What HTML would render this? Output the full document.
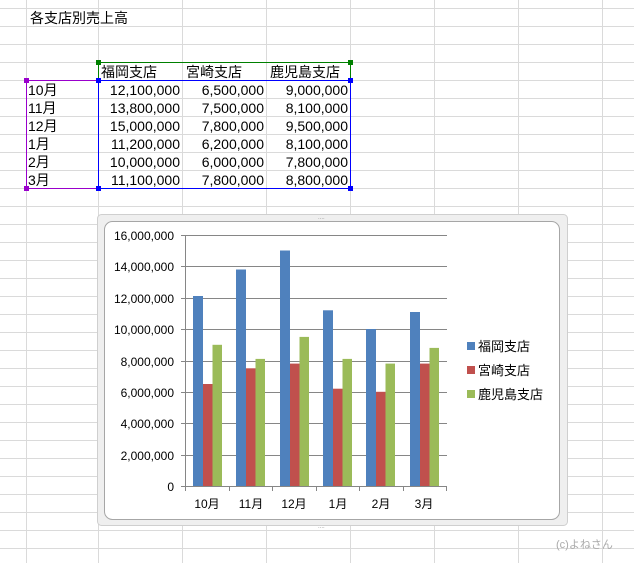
<!DOCTYPE html>
<html><head><meta charset="utf-8"><style>
body{margin:0;width:634px;height:563px;background:#fff;position:relative;overflow:hidden;font-family:"Liberation Sans","Noto Sans CJK JP",sans-serif;}
.t{position:absolute;font-size:14px;line-height:19px;white-space:nowrap;color:#000;}
.r{text-align:right;}
</style></head><body>
<svg width="634" height="563" style="position:absolute;left:0;top:0">
<g stroke="#dadada" stroke-width="1">
<line x1="26.5" y1="0" x2="26.5" y2="563"/><line x1="98.5" y1="0" x2="98.5" y2="563"/>
<line x1="182.5" y1="0" x2="182.5" y2="563"/><line x1="266.5" y1="0" x2="266.5" y2="563"/>
<line x1="350.5" y1="0" x2="350.5" y2="563"/><line x1="434.5" y1="0" x2="434.5" y2="563"/>
<line x1="518.5" y1="0" x2="518.5" y2="563"/><line x1="602.5" y1="0" x2="602.5" y2="563"/>
<line x1="0" y1="8.5" x2="634" y2="8.5"/><line x1="0" y1="26.5" x2="634" y2="26.5"/>
<line x1="0" y1="44.5" x2="634" y2="44.5"/><line x1="0" y1="62.5" x2="634" y2="62.5"/>
<line x1="0" y1="80.5" x2="634" y2="80.5"/><line x1="0" y1="98.5" x2="634" y2="98.5"/>
<line x1="0" y1="116.5" x2="634" y2="116.5"/><line x1="0" y1="134.5" x2="634" y2="134.5"/>
<line x1="0" y1="152.5" x2="634" y2="152.5"/><line x1="0" y1="170.5" x2="634" y2="170.5"/>
<line x1="0" y1="188.5" x2="634" y2="188.5"/><line x1="0" y1="206.5" x2="634" y2="206.5"/>
<line x1="0" y1="224.5" x2="634" y2="224.5"/><line x1="0" y1="242.5" x2="634" y2="242.5"/>
<line x1="0" y1="260.5" x2="634" y2="260.5"/><line x1="0" y1="278.5" x2="634" y2="278.5"/>
<line x1="0" y1="296.5" x2="634" y2="296.5"/><line x1="0" y1="314.5" x2="634" y2="314.5"/>
<line x1="0" y1="332.5" x2="634" y2="332.5"/><line x1="0" y1="350.5" x2="634" y2="350.5"/>
<line x1="0" y1="368.5" x2="634" y2="368.5"/><line x1="0" y1="386.5" x2="634" y2="386.5"/>
<line x1="0" y1="404.5" x2="634" y2="404.5"/><line x1="0" y1="422.5" x2="634" y2="422.5"/>
<line x1="0" y1="440.5" x2="634" y2="440.5"/><line x1="0" y1="458.5" x2="634" y2="458.5"/>
<line x1="0" y1="476.5" x2="634" y2="476.5"/><line x1="0" y1="494.5" x2="634" y2="494.5"/>
<line x1="0" y1="512.5" x2="634" y2="512.5"/><line x1="0" y1="530.5" x2="634" y2="530.5"/>
<line x1="0" y1="548.5" x2="634" y2="548.5"/>
</g>
<rect x="98.5" y="62.5" width="252" height="18" fill="none" stroke="#008000"/>
<rect x="26.5" y="80.5" width="72" height="108" fill="none" stroke="#9900cc"/>
<rect x="98.5" y="80.5" width="252" height="108" fill="none" stroke="#0000ff"/>
<g fill="#008000"><rect x="96" y="60" width="5" height="5"/><rect x="348" y="60" width="5" height="5"/></g>
<g fill="#9900cc"><rect x="24" y="78" width="5" height="5"/><rect x="24" y="186" width="5" height="5"/><rect x="96" y="186" width="5" height="5"/></g>
<g fill="#0000ff"><rect x="96" y="78" width="5" height="5"/><rect x="348" y="78" width="5" height="5"/><rect x="348" y="186" width="5" height="5"/><rect x="96" y="186" width="5" height="5"/></g>
<rect x="97.5" y="214.5" width="470" height="311" rx="4" fill="#efefef" stroke="#cfcfcf"/>
<rect x="104.5" y="221.5" width="455" height="298" rx="8" fill="#fff" stroke="#a6a6a6"/>
<g fill="#999"><text x="318" y="219" font-size="6">....</text><text x="318" y="528" font-size="6">....</text></g>
<g stroke="#868686" stroke-width="1">
<line x1="186" y1="235.5" x2="447" y2="235.5"/><line x1="186" y1="266.5" x2="447" y2="266.5"/>
<line x1="186" y1="298.5" x2="447" y2="298.5"/><line x1="186" y1="329.5" x2="447" y2="329.5"/>
<line x1="186" y1="361.5" x2="447" y2="361.5"/><line x1="186" y1="392.5" x2="447" y2="392.5"/>
<line x1="186" y1="423.5" x2="447" y2="423.5"/><line x1="186" y1="455.5" x2="447" y2="455.5"/>
<line x1="181" y1="486.5" x2="447" y2="486.5"/>
<line x1="185.5" y1="235" x2="185.5" y2="486"/>
<g><line x1="181" y1="235.5" x2="186" y2="235.5"/><line x1="181" y1="266.5" x2="186" y2="266.5"/><line x1="181" y1="298.5" x2="186" y2="298.5"/><line x1="181" y1="329.5" x2="186" y2="329.5"/><line x1="181" y1="361.5" x2="186" y2="361.5"/><line x1="181" y1="392.5" x2="186" y2="392.5"/><line x1="181" y1="423.5" x2="186" y2="423.5"/><line x1="181" y1="455.5" x2="186" y2="455.5"/></g>
<line x1="185.5" y1="486" x2="185.5" y2="491"/><line x1="229.5" y1="486" x2="229.5" y2="491"/>
<line x1="272.5" y1="486" x2="272.5" y2="491"/><line x1="316.5" y1="486" x2="316.5" y2="491"/>
<line x1="359.5" y1="486" x2="359.5" y2="491"/><line x1="403.5" y1="486" x2="403.5" y2="491"/>
<line x1="446.5" y1="486" x2="446.5" y2="491"/>
</g>
<g fill="#4f81bd">
<rect x="193" y="296" width="10" height="190"/><rect x="236" y="269.5" width="10" height="216.5"/>
<rect x="280" y="250.5" width="10" height="235.5"/><rect x="323" y="310.3" width="10" height="175.7"/>
<rect x="366" y="329" width="10" height="157"/><rect x="410" y="312" width="10" height="174"/>
</g>
<g fill="#c0504d">
<rect x="203" y="384" width="9.5" height="102"/><rect x="246" y="368.3" width="9.5" height="117.7"/>
<rect x="290" y="363.6" width="9.5" height="122.4"/><rect x="333" y="388.7" width="9.5" height="97.3"/>
<rect x="376" y="391.8" width="9.5" height="94.2"/><rect x="420" y="363.6" width="9.5" height="122.4"/>
</g>
<g fill="#9bbb59">
<rect x="212.5" y="344.8" width="9.5" height="141.2"/><rect x="255.5" y="358.9" width="9.5" height="127.1"/>
<rect x="299.5" y="336.9" width="9.5" height="149.1"/><rect x="342.5" y="358.9" width="9.5" height="127.1"/>
<rect x="385.5" y="363.6" width="9.5" height="122.4"/><rect x="429.5" y="347.9" width="9.5" height="138.1"/>
</g>
<g font-family="Liberation Sans,sans-serif" font-size="12" fill="#000" text-anchor="end">
<text x="174" y="240">16,000,000</text><text x="174" y="271">14,000,000</text>
<text x="174" y="303">12,000,000</text><text x="174" y="334">10,000,000</text>
<text x="174" y="366">8,000,000</text><text x="174" y="397">6,000,000</text>
<text x="174" y="428">4,000,000</text><text x="174" y="460">2,000,000</text>
<text x="174" y="491">0</text>
</g>
<g font-family="Liberation Sans,Noto Sans CJK JP,sans-serif" font-size="12" fill="#000" text-anchor="middle">
<text x="207" y="508">10月</text><text x="251" y="508">11月</text><text x="294" y="508">12月</text>
<text x="338" y="508">1月</text><text x="381" y="508">2月</text><text x="424" y="508">3月</text>
</g>
<rect x="467" y="342" width="8" height="8" fill="#4f81bd"/>
<rect x="467" y="366" width="8" height="8" fill="#c0504d"/>
<rect x="467" y="390" width="8" height="8" fill="#9bbb59"/>
<g font-family="Liberation Sans,Noto Sans CJK JP,sans-serif" font-size="13" fill="#000">
<text x="478" y="351">福岡支店</text><text x="478" y="375">宮崎支店</text><text x="478" y="399">鹿児島支店</text>
</g>
<text x="556" y="548" font-family="Liberation Sans,Noto Sans CJK JP,sans-serif" font-size="11" fill="#aaa">(c)よねさん</text>
</svg>
<div class="t" style="left:30px;top:9px">各支店別売上高</div>
<div class="t" style="left:101px;top:63px">福岡支店</div>
<div class="t" style="left:186px;top:63px">宮崎支店</div>
<div class="t" style="left:270px;top:63px">鹿児島支店</div>
<div class="t" style="left:28px;top:81px">10月</div>
<div class="t" style="left:28px;top:99px">11月</div>
<div class="t" style="left:28px;top:117px">12月</div>
<div class="t" style="left:28px;top:135px">1月</div>
<div class="t" style="left:28px;top:153px">2月</div>
<div class="t" style="left:28px;top:171px">3月</div>
<div class="t r" style="left:100px;width:80px;top:81px">12,100,000</div>
<div class="t r" style="left:100px;width:80px;top:99px">13,800,000</div>
<div class="t r" style="left:100px;width:80px;top:117px">15,000,000</div>
<div class="t r" style="left:100px;width:80px;top:135px">11,200,000</div>
<div class="t r" style="left:100px;width:80px;top:153px">10,000,000</div>
<div class="t r" style="left:100px;width:80px;top:171px">11,100,000</div>
<div class="t r" style="left:184px;width:80px;top:81px">6,500,000</div>
<div class="t r" style="left:184px;width:80px;top:99px">7,500,000</div>
<div class="t r" style="left:184px;width:80px;top:117px">7,800,000</div>
<div class="t r" style="left:184px;width:80px;top:135px">6,200,000</div>
<div class="t r" style="left:184px;width:80px;top:153px">6,000,000</div>
<div class="t r" style="left:184px;width:80px;top:171px">7,800,000</div>
<div class="t r" style="left:268px;width:80px;top:81px">9,000,000</div>
<div class="t r" style="left:268px;width:80px;top:99px">8,100,000</div>
<div class="t r" style="left:268px;width:80px;top:117px">9,500,000</div>
<div class="t r" style="left:268px;width:80px;top:135px">8,100,000</div>
<div class="t r" style="left:268px;width:80px;top:153px">7,800,000</div>
<div class="t r" style="left:268px;width:80px;top:171px">8,800,000</div>
</body></html>
